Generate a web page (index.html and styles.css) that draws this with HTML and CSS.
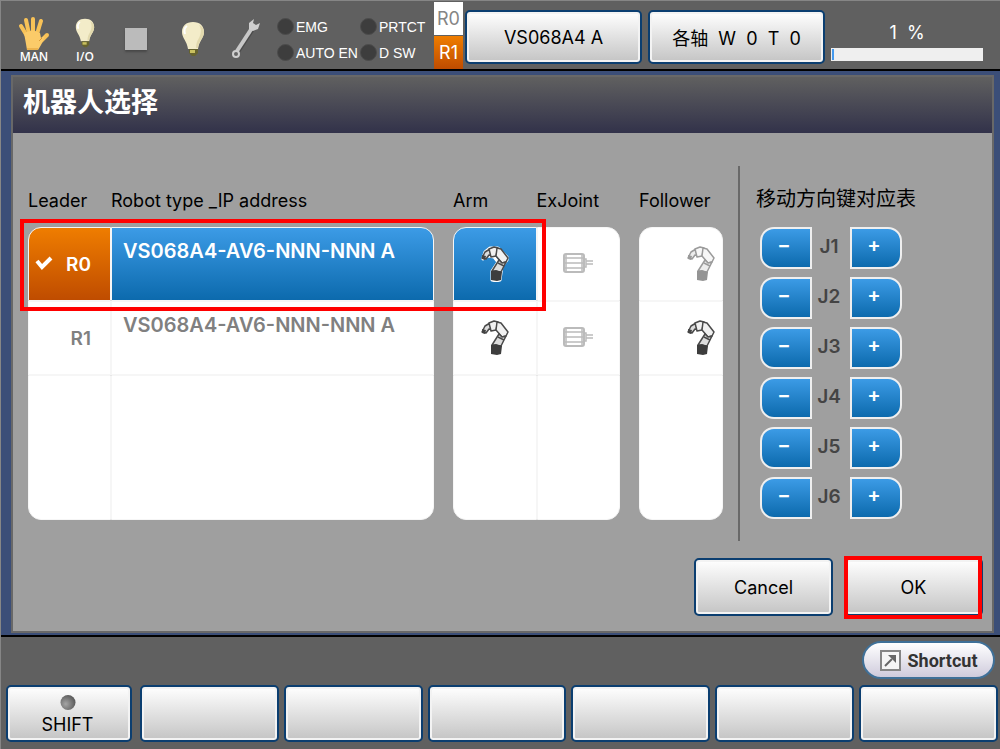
FILE: index.html
```
<!DOCTYPE html>
<html lang="zh-CN">
<head>
  <meta charset="UTF-8" />
  <meta name="viewport" content="width=device-width, initial-scale=1.0"/>
  <title>机器人选择</title>
  <link rel="stylesheet" href="styles.css">
</head>
<body>

  <!-- Shared icons -->
  <svg class="sprite" aria-hidden="true">
    <defs>
      <radialGradient id="ball" cx=".35" cy=".6" r=".7">
        <stop offset="0" stop-color="#a5a5a5"/>
        <stop offset="1" stop-color="#555"/>
      </radialGradient>
    </defs>
    <symbol id="bulb" viewBox="0 0 24 36">
      <path d="M12 1C5 1 1 5 1 11c0 6 5 9 6 17h10c1-8 6-11 6-17 0-6-4-10-11-10z" fill="#f3ecc9"/>
      <path d="M18 4c3 4 2 9 0 13-2 3-3 6-3 10h2c1-8 6-10 6-16 0-3-2-6-5-7z" fill="#e2d9ad"/>
      <path d="M6 5c-3 2-3 5-2 8" fill="none" stroke="#fff" stroke-width="2"/>
      <path d="M8 28h9v4l-3 3h-3l-3-3z" fill="#66632e"/>
      <path d="M9 29h5v3H9z" fill="#c9c060"/>
    </symbol>
    <symbol id="arm" viewBox="0 0 28 36">
      <!-- white outline, only seen on the blue cell -->
      <path d="M2 12l2-6 5-4h8l9 9v3l-5 6-2 14-4 1-4-1V25l6-9-4-5-6-1-5 3z" fill="none" stroke="#fff" stroke-width="3" stroke-linejoin="round"/>
      <g stroke="#4a4a4a" stroke-width="1.5" stroke-linejoin="round">
        <path d="M1 12l3-6 5-3 4 7-5-1-3 4z" fill="#ddd"/>
        <path d="M8 3l5-2 4 1-2 8-5 1z" fill="#f1f1f1"/>
        <path d="M16 2l4 1 7 9-2 4-4 1-6-7z" fill="#f1f1f1"/>
        <path d="M18 14l3 3 4-1-5 10-9-1z" fill="#ddd"/>
        <path d="M17 17l6 3" fill="none"/>
      </g>
      <path d="M1 9l4 1-1 4-3-1z" fill="#444"/>
      <path d="M10 25l5-1 6 2-1 8-4 1-6-1z" fill="#3d3d3d"/>
    </symbol>
    <symbol id="motor" viewBox="0 0 32 22">
      <rect x="2" y="2" width="20" height="18" rx="2" fill="#fff" stroke="#bbb" stroke-width="2"/>
      <path d="M3 6h18M3 11h18M3 16h18M4 2v18M20 2v18M22 7h2v8h-2M24 9h7M24 12h7" fill="none" stroke="#bbb" stroke-width="1.5"/>
    </symbol>
  </svg>

  <header class="status-bar">
    <div class="status-icons">
      <div class="icon-item">
        <svg width="32" height="35" viewBox="0 0 32 35" aria-hidden="true">
          <g fill="none" stroke="#f8c257" stroke-width="4" stroke-linecap="round">
            <path d="M9 20L3 10"/>
            <path d="M11 18L8 4"/>
            <path d="M15 17V3"/>
            <path d="M19 18l4-13"/>
            <path d="M22 26l7-7"/>
          </g>
          <path d="M6 17l9-3 7 3 1 5 4-2-4 9-3 5H9l-1-6z" fill="#fbcb69"/>
          <path d="M9 33h11M21 25l3-3" stroke="#dc9b35" fill="none"/>
        </svg>
        <span>MAN</span>
      </div>
      <div class="icon-item io">
        <svg width="20" height="30" aria-hidden="true"><use href="#bulb"/></svg>
        <span>I/O</span>
      </div>
      <div class="stop-mark"></div>
      <svg width="24" height="36" aria-hidden="true"><use href="#bulb"/></svg>
      <svg width="32" height="42" viewBox="0 0 32 42" aria-hidden="true">
        <path d="M10 34L25 11" stroke="#4b4b4b" stroke-width="4"/>
        <path d="M9 33L24 10" stroke="#c8c8c8" stroke-width="4"/>
        <circle cx="8" cy="36" r="3" fill="#666" stroke="#cfcfcf" stroke-width="2"/>
        <path d="M26 1l-5 4v6l4 2 5-2 2-6-4 2-3-2z" fill="#cfcfcf"/>
      </svg>
    </div>

    <ul class="leds">
      <li>EMG</li>
      <li>PRTCT</li>
      <li>AUTO EN</li>
      <li>D SW</li>
    </ul>

    <div class="robot-tabs">
      <button type="button">R0</button>
      <button type="button" class="active">R1</button>
    </div>

    <button type="button" class="btn top-btn">VS068A4 A</button>
    <button type="button" class="btn top-btn">各轴&nbsp; W&nbsp; 0&nbsp; T&nbsp; 0</button>

    <div class="speed">
      <span>1 &nbsp;%</span>
      <div class="speed-bar"><div style="width: 1%"></div></div>
    </div>
  </header>

  <main>
    <section class="window">
      <h1>机器人选择</h1>

      <div class="content">
        <div class="tables">
          <table class="robots">
            <thead>
              <tr><th class="col">Leader</th><th>Robot type _IP address</th></tr>
            </thead>
            <tbody>
              <tr>
                <td class="leader selected">
                  <svg width="18" height="16" viewBox="0 0 18 16" aria-hidden="true"><path d="M2 6l5 6 9-9" fill="none" stroke="#fff" stroke-width="4"/></svg>
                  R0
                </td>
                <td class="type picked">VS068A4-AV6-NNN-NNN A</td>
              </tr>
              <tr><td class="leader">R1</td><td class="type">VS068A4-AV6-NNN-NNN A</td></tr>
              <tr class="empty"><td></td><td></td></tr>
            </tbody>
          </table>

          <table class="joints">
            <thead>
              <tr><th class="col">Arm</th><th class="col">ExJoint</th></tr>
            </thead>
            <tbody>
              <tr>
                <td class="picked"><svg class="arm" role="img" aria-label="Arm"><use href="#arm"/></svg></td>
                <td><svg class="motor" role="img" aria-label="ExJoint"><use href="#motor"/></svg></td>
              </tr>
              <tr>
                <td><svg class="arm" role="img" aria-label="Arm"><use href="#arm"/></svg></td>
                <td><svg class="motor" role="img" aria-label="ExJoint"><use href="#motor"/></svg></td>
              </tr>
              <tr class="empty"><td></td><td></td></tr>
            </tbody>
          </table>

          <table class="follower">
            <thead>
              <tr><th class="col">Follower</th></tr>
            </thead>
            <tbody>
              <tr><td><svg class="arm faded" role="img" aria-label="Follower"><use href="#arm"/></svg></td></tr>
              <tr><td><svg class="arm" role="img" aria-label="Follower"><use href="#arm"/></svg></td></tr>
              <tr class="empty"><td></td></tr>
            </tbody>
          </table>

          <div class="highlight"></div>
        </div>

        <div class="jog">
          <h2>移动方向键对应表</h2>
          <div class="jog-row"><button type="button" class="minus">−</button><span>J1</span><button type="button" class="plus">+</button></div>
          <div class="jog-row"><button type="button" class="minus">−</button><span>J2</span><button type="button" class="plus">+</button></div>
          <div class="jog-row"><button type="button" class="minus">−</button><span>J3</span><button type="button" class="plus">+</button></div>
          <div class="jog-row"><button type="button" class="minus">−</button><span>J4</span><button type="button" class="plus">+</button></div>
          <div class="jog-row"><button type="button" class="minus">−</button><span>J5</span><button type="button" class="plus">+</button></div>
          <div class="jog-row"><button type="button" class="minus">−</button><span>J6</span><button type="button" class="plus">+</button></div>
        </div>
      </div>

      <div class="actions">
        <button type="button" class="btn">Cancel</button>
        <button type="button" class="btn ok">OK</button>
      </div>
    </section>
  </main>

  <footer>
    <button type="button" class="shortcut">
      <svg width="21" height="21" viewBox="0 0 21 21" aria-hidden="true">
        <path d="M1 1h19v19H1z" fill="#f5f5f5" stroke="#858585" stroke-width="2"/>
        <path d="M5 16l7-7" stroke="#666" stroke-width="2"/>
        <path d="M8 5h8v8z" fill="#666"/>
      </svg>
      Shortcut
    </button>
    <div class="function-keys">
      <button type="button" class="btn shift">
        <svg width="16" height="16" viewBox="0 0 16 16" aria-hidden="true"><circle cx="8" cy="8" r="8" fill="url(#ball)"/></svg>
        SHIFT
      </button>
      <button type="button" class="btn" aria-label="F1"></button>
      <button type="button" class="btn" aria-label="F2"></button>
      <button type="button" class="btn" aria-label="F3"></button>
      <button type="button" class="btn" aria-label="F4"></button>
      <button type="button" class="btn" aria-label="F5"></button>
      <button type="button" class="btn" aria-label="F6"></button>
    </div>
  </footer>

</body>
</html>
```

FILE: styles.css
```
/* Global Styles */
* {
  box-sizing: border-box;
}
body {
  margin: 0;
  min-height: 100vh;
  display: flex;
  flex-direction: column;
  background: #606060;
  border: 1px solid #868686;
  border-right: none;
  font-family: Inter, "Noto Sans CJK SC", sans-serif;
  font-size: 18px;
  color: #000;
}
button {
  font: inherit;
  color: inherit;
  padding: 0;
  cursor: pointer;
}
.sprite {
  position: absolute;
  width: 0;
  height: 0;
}
.btn {
  border: 2px solid #0b3e70;
  border-radius: 5px;
  background: linear-gradient(#fff, #c4c4c4);
  box-shadow: inset 0 0 0 2px #f3f3f3;
}

/* Status bar */
.status-bar {
  display: flex;
  align-items: center;
  height: 70px;
  border-bottom: 2px solid #000;
}
.status-icons {
  display: flex;
  align-items: center;
  width: 276px;
  padding: 8px 0 0 17px;
  gap: 23px;
}
.icon-item {
  display: flex;
  flex-direction: column;
  align-items: center;
  width: 32px;
  color: #fff;
  font-family: "Open Sans", sans-serif;
  font-size: 12px;
  font-weight: 600;
  line-height: 12px;
}
.io {
  width: 24px;
}
.io svg {
  margin: 2px 0 3px;
}
.stop-mark {
  width: 22px;
  height: 22px;
  margin: 0 11px 0 5px;
  background: #bbb;
  box-shadow: 0 2px 2px #484848;
}
.leds {
  display: grid;
  grid-template-columns: 83px 74px;
  margin: 0;
  padding: 9px 0 0;
  list-style: none;
  color: #fff;
  font-family: "Liberation Sans", sans-serif;
  font-size: 14px;
  line-height: 26px;
}
.leds li {
  display: flex;
  align-items: center;
  gap: 2px;
  white-space: nowrap;
}
.leds li::before {
  content: "";
  width: 15px;
  height: 15px;
  border-radius: 50%;
  background: #3d3d3d;
  border: 1px solid #4c4c4c;
}
.robot-tabs {
  display: flex;
  flex-direction: column;
  width: 29px;
  gap: 1px;
}
.robot-tabs button {
  height: 33px;
  border: none;
  background: #fff;
  color: #858585;
}
.robot-tabs .active {
  background: linear-gradient(#ef7d00, #bf4c00);
  color: #fff;
}
.top-btn {
  width: 177px;
  height: 54px;
  margin: 4px 4px 0 2px;
}
.speed {
  flex: 1;
  margin: 10px 17px 0 2px;
  color: #fff;
  text-align: center;
  line-height: 26px;
}
.speed-bar {
  height: 13px;
  margin-top: 2px;
  padding: 1px;
  background: #efefef;
}
.speed-bar div {
  height: 100%;
  background: #4499ee;
}

/* Main window */
main {
  flex: 1;
  display: flex;
  padding: 4px 6px 2px 10px;
  background: #3b4e78;
}
.window {
  flex: 1;
  border: 2px solid #686868;
  background: #9f9f9f;
}
h1 {
  margin: 0;
  padding: 0 10px;
  background: linear-gradient(#606060, #32324a);
  color: #fff;
  font-size: 27px;
  font-weight: 700;
  line-height: 52px;
  height: 56px;
}
.content {
  display: flex;
  margin-top: 33px;
  padding-left: 15px;
}
.tables {
  position: relative;
  flex: 1;
  display: flex;
  gap: 19px;
}
table {
  width: 167px;
  height: 354px;
  table-layout: fixed;
  border-spacing: 0;
}
.robots {
  flex: 1;
}
.follower {
  width: 84px;
}
th {
  height: 61px;
  padding: 7px 0 0;
  font-weight: 400;
  text-align: left;
  white-space: nowrap;
}
.col {
  width: 83px;
}
td {
  height: 74px;
  padding: 0;
  background: #fff;
  border: 1px solid #f6f6f6;
  text-align: center;
  color: #808080;
}
.empty td {
  height: 145px;
}
tbody tr:first-child td:first-child {
  border-top-left-radius: 13px;
}
tbody tr:first-child td:last-child {
  border-top-right-radius: 13px;
}
tbody tr:last-child td:first-child {
  border-bottom-left-radius: 13px;
}
tbody tr:last-child td:last-child {
  border-bottom-right-radius: 13px;
}
.leader {
  padding: 0 19px 0 0;
  text-align: right;
  font-size: 19px;
  font-weight: 600;
}
.type {
  padding: 11px;
  text-align: left;
  vertical-align: top;
  font-size: 20px;
  font-weight: 600;
}
.selected {
  background: linear-gradient(#ef7d00, #bf4c00);
  color: #fff;
}
.selected svg {
  margin-right: 8px;
}
.picked {
  background: linear-gradient(#3c9be6, #0c6aad);
  color: #fff;
}
.arm {
  width: 28px;
  height: 36px;
  vertical-align: middle;
}
.motor {
  width: 32px;
  height: 22px;
  margin-bottom: 3px;
  vertical-align: middle;
}
.follower .arm {
  margin-left: 40px;
}
.faded {
  opacity: .55;
}
/* Red frame around the selected robot */
.highlight {
  position: absolute;
  top: 53px;
  left: -8px;
  right: 177px;
  height: 92px;
  border: 4px solid #f00;
  pointer-events: none;
}

/* Jog key table */
.jog {
  width: 254px;
  height: 375px;
  margin-left: 15px;
  padding: 20px 0 0 20px;
  border-left: 2px solid #696969;
}
h2 {
  margin: 0 0 15px -4px;
  font-size: 20px;
  font-weight: 400;
  line-height: 26px;
}
.jog-row {
  display: flex;
  align-items: center;
  margin-bottom: 8px;
}
.jog-row span {
  width: 38px;
  padding: 0 4px 4px 0;
  text-align: center;
  color: #444;
  font-size: 19px;
  font-weight: 600;
}
.jog-row button {
  width: 52px;
  height: 42px;
  padding: 0 4px 6px 0;
  border: 2px solid #efefef;
  background: linear-gradient(#3c9be6, #0c6aad);
  color: #fff;
  font-size: 20px;
  font-weight: 600;
}
.jog-row .minus {
  border-radius: 14px 0 0 14px;
}
.jog-row .plus {
  border-radius: 0 14px 14px 0;
}
.actions {
  display: flex;
  justify-content: flex-end;
  gap: 11px;
  margin: 17px 9px 15px;
}
.actions .btn {
  width: 139px;
  height: 58px;
}
.ok {
  position: relative;
}
.ok::after {
  content: "";
  position: absolute;
  inset: -4px -1px -5px -2px;
  border: 4px solid #f00;
}

/* Footer */
footer {
  padding: 4px 2px 8px 5px;
  border-top: 2px solid #000;
}
.shortcut {
  display: flex;
  align-items: center;
  justify-content: center;
  gap: 7px;
  width: 133px;
  height: 38px;
  margin: 0 3px 6px auto;
  border: 2px solid #3f7098;
  border-radius: 19px;
  background: linear-gradient(#fff, #cfcbdc);
  color: #333;
  font-family: Roboto, sans-serif;
  font-weight: 700;
}
.function-keys {
  display: grid;
  grid-template-columns: 129px repeat(6, 1fr);
  gap: 5px;
}
.function-keys .btn {
  height: 57px;
}
.function-keys .shift {
  display: flex;
  flex-direction: column;
  align-items: center;
  margin-right: 3px;
  padding: 8px 3px 0 0;
  line-height: 30px;
}
```
